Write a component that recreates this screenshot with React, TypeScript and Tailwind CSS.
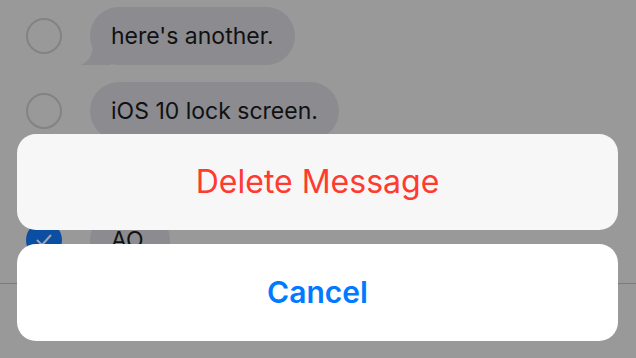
import React from 'react';

const rows = [
  { text: "here's another.", checked: false, tail: true, top: 'mt-[7px]' },
  { text: 'iOS 10 lock screen.', checked: false, tail: false, top: 'mt-[17px]' },
  { text: 'AO.', checked: true, tail: false, top: 'mt-[71px]' },
];

function Bubble({ text, tail }: { text: string; tail: boolean }) {
  return (
    <div className="relative">
      {tail && (
        <svg className="absolute -left-[9px] bottom-0" width="30" height="22" viewBox="0 0 30 22">
          <path d="M30 0 L30 22 L0 22 C8 18 12 12 12 0 Z" fill="#8b8b90" />
        </svg>
      )}
      <div className="relative flex h-[58px] items-center rounded-[29px] bg-[#8b8b90] pl-[21px] pr-[21px] text-[23px] text-[#111]">
        {text}
      </div>
    </div>
  );
}

export default function App() {
  return (
    <div
      className="relative h-[358px] w-[636px] overflow-hidden bg-[#999999]"
      style={{ fontFamily: "Inter, 'Liberation Sans', sans-serif" }}
    >
      {/* Message list behind the sheet */}
      <div className="flex flex-col">
        {rows.map(row => (
          <div key={row.text} className={`flex items-center ${row.top}`}>
            {row.checked ? (
              <div className="ml-[26px] flex h-9 w-9 items-center justify-center rounded-full bg-[#0b4ea2]">
                <svg width="18" height="14" viewBox="0 0 18 14">
                  <path d="M2 7 L7 12 L16 2" stroke="#9aa6b6" strokeWidth="2" fill="none" />
                </svg>
              </div>
            ) : (
              <div className="ml-[26px] h-9 w-9 rounded-full border-2 border-[#838383]" />
            )}
            <div className="ml-[28px]">
              <Bubble text={row.text} tail={row.tail} />
            </div>
          </div>
        ))}
        <div className="mt-[14px] h-px bg-[#7c7c7c]" />
        <div className="ml-[24px] mt-[19px] h-9 w-9 rounded-full bg-[#2f6fc0]" />
      </div>

      {/* Action sheet */}
      <div className="absolute left-[17px] right-[18px] top-[134px] flex flex-col gap-[14px]">
        <button className="flex h-[96px] items-center justify-center rounded-[19px] bg-[#f7f7f7] text-[32px] text-[#ff3b30]">
          Delete Message
        </button>
        <button className="flex h-[97px] items-center justify-center rounded-[19px] bg-white text-[30px] font-semibold text-[#007aff]">
          Cancel
        </button>
      </div>
    </div>
  );
}
